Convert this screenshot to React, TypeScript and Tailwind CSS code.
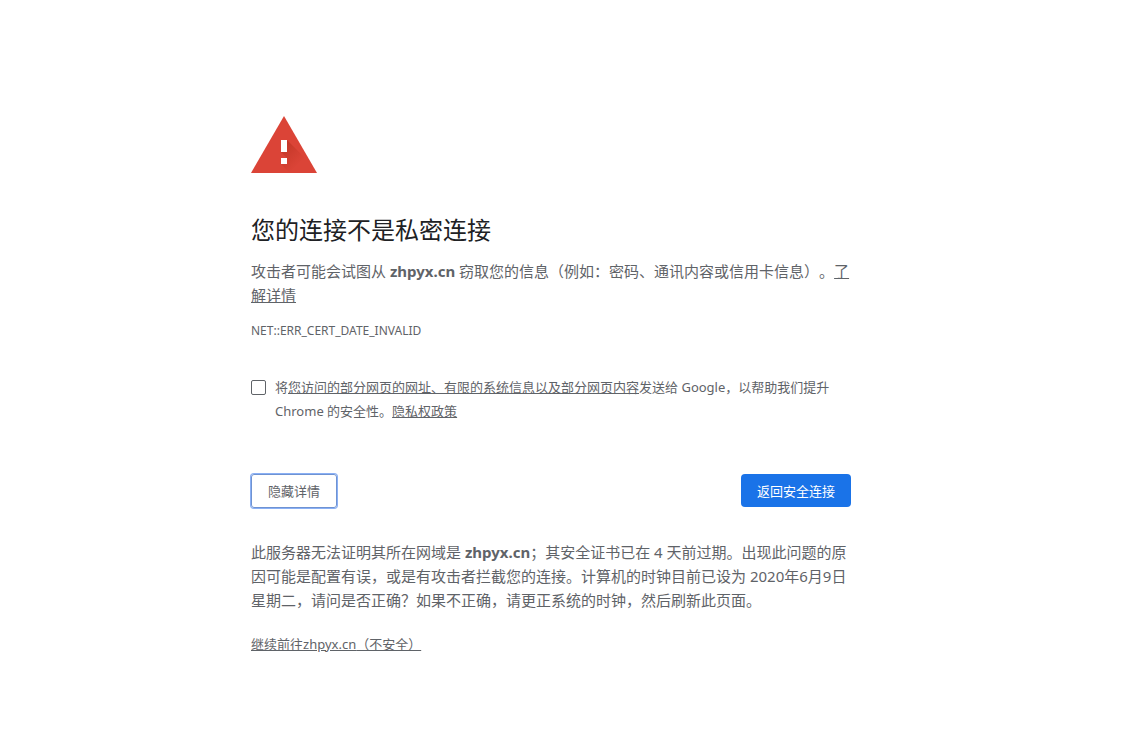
import React, { useState } from 'react';

const HOST = 'zhpyx.cn';

function WarningIcon() {
  return (
    <svg className="block w-[66px] h-[57px]" viewBox="0 0 66 57" aria-hidden="true">
      <defs>
        <linearGradient id="shade" gradientUnits="userSpaceOnUse" x1="32" y1="32" x2="48" y2="48">
          <stop offset="0" stopColor="#a52714" stopOpacity="0.4" />
          <stop offset="1" stopColor="#a52714" stopOpacity="0" />
        </linearGradient>
      </defs>
      <path d="M33 0 66 57H0z" fill="#db4437" />
      <path d="M36 24 52 40 62 57H39L30 48l6-6-6-6z" fill="url(#shade)" />
      <path d="M30 24h6v12h-6zM30 42h6v6h-6z" fill="#fff" />
    </svg>
  );
}

export default function App() {
  const [report, setReport] = useState(false);
  const [showDetails, setShowDetails] = useState(true);

  return (
    <div lang="zh-CN" className="pr-[38px] font-['Noto_Sans','Noto_Sans_CJK_SC',sans-serif] text-[15px] leading-6 text-[#5f6368] [text-spacing-trim:space-all]">
      <main className="mx-auto w-full max-w-[600px] pt-[116px] pb-16">
        <WarningIcon />

        <h1 className="mt-[41px] text-2xl leading-8 text-[#202124]">您的连接不是私密连接</h1>
        <p className="mt-[13px]">
          攻击者可能会试图从 <strong>{HOST}</strong> 窃取您的信息&#xff08;例如&#xff1a;密码、通讯内容或信用卡信息&#xff09;。<a href="#learn-more" className="underline">了解详情</a>
        </p>
        <p className="mt-3 text-xs leading-6">NET::ERR_CERT_DATE_INVALID</p>

        <div className="mt-8 flex items-start gap-[9px] text-[13px] leading-6">
          <input
            id="report"
            type="checkbox"
            checked={report}
            onChange={(e) => setReport(e.target.checked)}
            className="mt-[5px] size-[15px] shrink-0 appearance-none rounded-[2px] border border-[#5f6368] bg-white checked:bg-[#1a73e8]"
          />
          <label htmlFor="report">
            将<a href="#whitepaper" className="underline">您访问的部分网页的网址、有限的系统信息以及部分网页内容</a>发送给 Google&#xff0c;以帮助我们提升 Chrome 的安全性。<a href="#privacy" className="underline">隐私权政策</a>
          </label>
        </div>

        <div className="mt-[51px] flex items-start justify-between text-[13px] leading-4">
          <button
            type="button"
            onClick={() => setShowDetails(!showDetails)}
            className="rounded-[3px] border border-[#6f93d2] px-4 py-2 ring-1 ring-[#8ab0f5]"
          >
            隐藏详情
          </button>
          <button type="button" className="min-h-[33px] rounded bg-[#1a73e8] px-4 py-2 text-white">
            返回安全连接
          </button>
        </div>

        {showDetails && (
          <section className="mt-8">
            <p>
              此服务器无法证明其所在网域是 <strong>{HOST}</strong>&#xff1b;其安全证书已在 4 天前过期。出现此问题的原因可能是配置有误&#xff0c;或是有攻击者拦截您的连接。计算机的时钟目前已设为 2020年6月9日星期二&#xff0c;请问是否正确&#xff1f;如果不正确&#xff0c;请更正系统的时钟&#xff0c;然后刷新此页面。
            </p>
            <p className="mt-5 text-[13px]">
              <a href="#proceed" className="underline">继续前往{HOST}&#xff08;不安全&#xff09;</a>
            </p>
          </section>
        )}
      </main>
    </div>
  );
}
